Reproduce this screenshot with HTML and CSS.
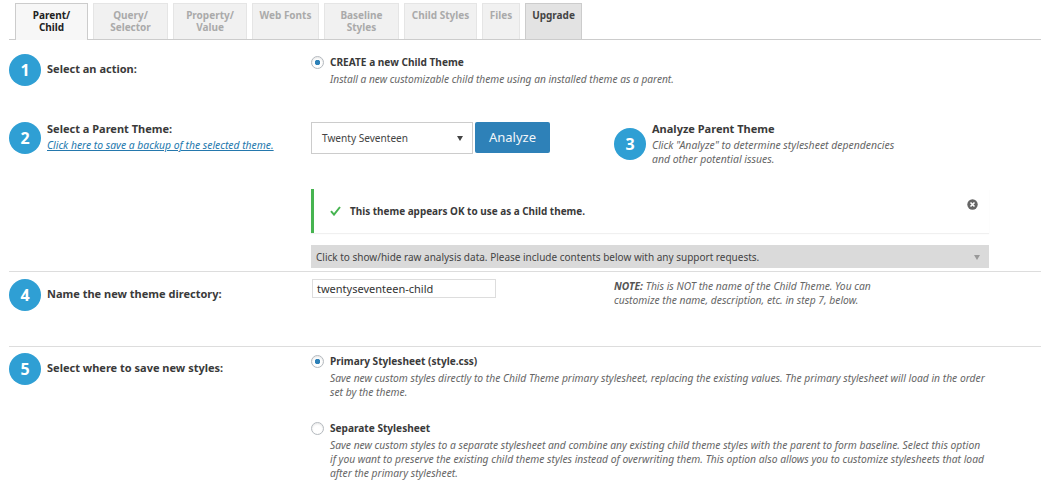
FILE: index.html

```html
<!DOCTYPE html>
<html lang="en">
<head>
    <meta charset="UTF-8">
    <title>Child Theme Configurator</title>
    <link rel="stylesheet" href="styles.css">
</head>
<body>
    <div class="tabs">
        <div class="tab tab-active tab-parent">Parent/<br>Child</div>
        <div class="tab tab-query">Query/<br>Selector</div>
        <div class="tab tab-property">Property/<br>Value</div>
        <div class="tab tab-fonts">Web Fonts</div>
        <div class="tab tab-baseline">Baseline<br>Styles</div>
        <div class="tab tab-child">Child Styles</div>
        <div class="tab tab-files">Files</div>
        <div class="tab tab-upgrade">Upgrade</div>
    </div>

    <div class="row row-action">
        <div class="step">
            <span class="num">1</span>
            <div class="step-label"><strong>Select an action:</strong></div>
        </div>
        <div class="options">
            <div class="option">
                <span class="radio radio-on"></span>
                <div>
                    <strong>CREATE a new Child Theme</strong>
                    <p class="hint">Install a new customizable child theme using an installed theme as a parent.</p>
                </div>
            </div>
        </div>
    </div>

    <div class="row row-parent">
        <div class="step">
            <span class="num">2</span>
            <div class="step-label step-label-top">
                <strong>Select a Parent Theme:</strong>
                <a href="#" class="backup">Click here to save a backup of the selected theme.</a>
            </div>
        </div>
        <div class="parent-main">
            <div class="parent-controls">
                <div class="select">Twenty Seventeen<span class="caret"></span></div>
                <button class="analyze">Analyze</button>
                <div class="step step-analyze">
                    <span class="num">3</span>
                    <div class="step-label step-label-top">
                        <strong>Analyze Parent Theme</strong>
                        <p class="hint">Click "Analyze" to determine stylesheet dependencies<br>and other potential issues.</p>
                    </div>
                </div>
            </div>
            <div class="notice">
                <svg class="check" width="11" height="10" viewBox="0 0 11 10"><path d="M1 5.2 L4 8.6 L10 1" fill="none" stroke="#46b450" stroke-width="2"/></svg>
                <strong>This theme appears OK to use as a Child theme.</strong>
                <svg class="dismiss" width="11" height="11" viewBox="0 0 11 11"><circle cx="5.5" cy="5.5" r="5.2" fill="#666"/><path d="M3.5 3.5 L7.5 7.5 M7.5 3.5 L3.5 7.5" stroke="#fff" stroke-width="1.6"/></svg>
            </div>
            <div class="raw-bar">Click to show/hide raw analysis data. Please include contents below with any support requests.<span class="caret caret-muted"></span></div>
        </div>
    </div>

    <div class="row row-name">
        <div class="step">
            <span class="num">4</span>
            <div class="step-label"><strong>Name the new theme directory:</strong></div>
        </div>
        <div class="name-main">
            <div class="text-input">twentyseventeen-child</div>
            <p class="hint note"><strong>NOTE:</strong> This is NOT the name of the Child Theme. You can<br>customize the name, description, etc. in step 7, below.</p>
        </div>
    </div>

    <div class="row row-save">
        <div class="step">
            <span class="num">5</span>
            <div class="step-label"><strong>Select where to save new styles:</strong></div>
        </div>
        <div class="options">
            <div class="option option-primary">
                <span class="radio radio-on"></span>
                <div>
                    <strong>Primary Stylesheet (style.css)</strong>
                    <p class="hint">Save new custom styles directly to the Child Theme primary stylesheet, replacing the existing values. The primary stylesheet will load in the order<br>set by the theme.</p>
                </div>
            </div>
            <div class="option">
                <span class="radio"></span>
                <div>
                    <strong>Separate Stylesheet</strong>
                    <p class="hint">Save new custom styles to a separate stylesheet and combine any existing child theme styles with the parent to form baseline. Select this option<br>if you want to preserve the existing child theme styles instead of overwriting them. This option also allows you to customize stylesheets that load<br>after the primary stylesheet.</p>
                </div>
            </div>
        </div>
    </div>
</body>
</html>
```

FILE: styles.css

```css
* {
    margin: 0;
    padding: 0;
    box-sizing: border-box;
}

body {
    font-family: "Noto Sans", "Open Sans", sans-serif;
    font-size: 10.1px;
    line-height: 14px;
    color: #3f3f3f;
    background: #fff;
    padding: 3px 0 0 9px;
    height: 490px;
    overflow: hidden;
}

strong {
    color: #3a3a3a;
    font-weight: 700;
}

/* tabs */
.tabs {
    display: flex;
    gap: 5px;
    height: 37px;
    padding-left: 6px;
    border-bottom: 1px solid #ccc;
}

.tab {
    height: 36px;
    padding-top: 5px;
    background: #f1f1f1;
    border: 1px solid #e5e5e5;
    border-bottom: none;
    color: #aaa;
    font-size: 10px;
    font-weight: 700;
    line-height: 12px;
    text-align: center;
}

.tab-active {
    height: 37px;
    background: #f7f7f7;
    border-color: #ccc;
    color: #222;
}

.tab-parent { width: 73px; }
.tab-query { width: 75px; }
.tab-property { width: 74px; }
.tab-fonts { width: 67px; }
.tab-baseline { width: 75px; }
.tab-child { width: 73px; }
.tab-files { width: 38px; }
.tab-upgrade {
    width: 57px;
    background: #e3e3e3;
    border-color: #ccc;
    color: #444;
}

/* rows */
.row {
    display: flex;
}

.row-action { height: 78px; padding-top: 14px; }
.row-parent { height: 153px; padding-top: 4px; }
.row-name {
    height: 75px;
    padding-top: 7px;
    border-top: 1px solid #ddd;
}
.row-save {
    padding-top: 6px;
    border-top: 1px solid #ddd;
}

.step {
    display: flex;
    align-items: center;
    align-self: flex-start;
    width: 302px;
    flex-shrink: 0;
}

.num {
    width: 32px;
    height: 32px;
    flex-shrink: 0;
    margin-right: 6px;
    border-radius: 50%;
    background: #2f9fd4;
    color: #fff;
    font-size: 16px;
    font-weight: 700;
    line-height: 32px;
    text-align: center;
}

.step-label {
    padding-bottom: 2px;
}

.step-label strong {
    font-size: 11px;
}

.step-label-top {
    align-self: flex-start;
    padding-bottom: 0;
}

.step-label strong,
.step-label .backup {
    display: block;
}

.backup {
    margin-top: 2px;
    color: #2478ad;
    font-size: 10.35px;
    font-style: italic;
}

.hint {
    color: #666;
    font-style: italic;
    white-space: nowrap;
}

.step-analyze .hint {
    margin-top: 2px;
    font-size: 10.45px;
}

/* options */
.options {
    flex: 1;
    padding-top: 1px;
}

.option {
    display: flex;
}

.option-primary {
    margin-bottom: 22px;
}

.option .hint {
    margin-top: 3px;
    font-size: 10.16px;
}

.row-save .option .hint {
    font-size: 10.29px;
}

.radio {
    width: 13px;
    height: 13px;
    flex-shrink: 0;
    margin: 1px 6px 0 0;
    border: 1px solid #b4b9be;
    border-radius: 50%;
    background: #fff;
    box-shadow: inset 0 1px 2px rgba(0, 0, 0, 0.1);
}

.radio-on {
    background: radial-gradient(circle, #2e81b8 0 2.5px, #fff 3px);
}

/* parent theme */
.parent-main {
    width: 678px;
}

.parent-controls {
    display: flex;
    height: 67px;
}

.select {
    position: relative;
    width: 162px;
    height: 32px;
    margin-right: 2px;
    padding: 8px 0 0 10px;
    border: 1px solid #ccc;
    color: #444;
}

.caret {
    position: absolute;
    right: 9px;
    top: 13px;
    border-left: 3.5px solid transparent;
    border-right: 3.5px solid transparent;
    border-top: 5px solid #444;
}

.caret-muted {
    top: 10px;
    border-top-color: #999;
}

.analyze {
    width: 75px;
    height: 31px;
    padding-bottom: 2px;
    background: #2e81b8;
    border: none;
    border-radius: 2px;
    color: #f2f6f9;
    font-family: inherit;
    font-size: 13px;
}

.step-analyze {
    width: auto;
    margin-left: 64px;
}

.notice {
    position: relative;
    display: flex;
    align-items: center;
    height: 44px;
    padding-left: 16px;
    border-left: 3px solid #46b450;
    box-shadow: 0 1px 1px rgba(0, 0, 0, 0.06);
    font-size: 9.95px;
}

.check {
    margin-right: 9px;
}

.dismiss {
    position: absolute;
    top: 10px;
    right: 11px;
}

.raw-bar {
    position: relative;
    height: 23px;
    margin-top: 12px;
    padding: 5px 0 0 5px;
    background: #dadada;
    color: #444;
    font-size: 10px;
}

/* directory name */
.name-main {
    display: flex;
    align-items: flex-start;
}

.text-input {
    width: 184px;
    height: 19px;
    margin: 0 118px 0 1px;
    padding-left: 4px;
    border: 1px solid #ddd;
    color: #333;
    font-size: 11px;
    line-height: 18px;
}

.note {
    font-size: 10.3px;
}

.note strong {
    color: #555;
}
```
